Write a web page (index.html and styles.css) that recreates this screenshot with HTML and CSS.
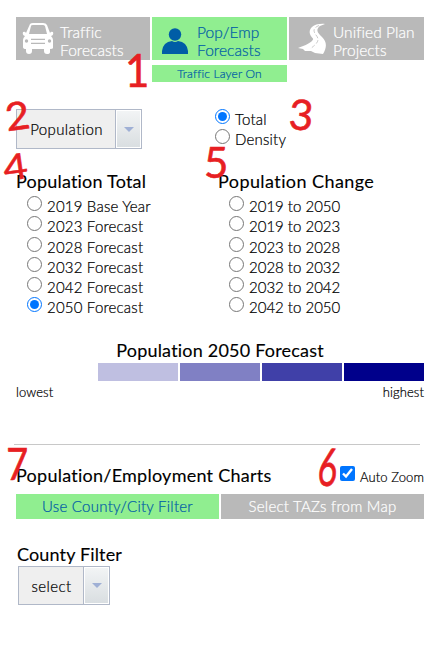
FILE: index.html
```html
<!DOCTYPE html>
<html lang="en">
<head>
<meta charset="utf-8">
<title>Population Forecasts</title>
<link rel="stylesheet" href="styles.css">
</head>
<body>
<main class="panel">
  <nav class="tabs">
    <div class="tab tab-traffic">
      <svg class="car" width="32" height="32" viewBox="0 0 32 32"><path fill="#fff" fill-rule="evenodd" d="M8 1Q9 0 11 0H21Q24 0 25 2L28 10Q29 8 31 9Q32 12 29 13Q31 15 31 17V25Q31 26 28 26V29Q28 31 25 31Q22 31 22 28V26H10V28Q10 31 7 31Q4 31 4 28V26Q1 26 1 24V17Q1 15 3 13Q0 12 1 9Q3 8 4 10ZM9 3L7 11H25L23 3Q22 2 21 2H11Q9 2 9 3Z"/><g fill="#b9b9b9"><circle cx="4.5" cy="18" r="1.7"/><circle cx="27.5" cy="18" r="1.7"/><path d="M9 15.7H23V17H9ZM9 19.7H23V21H9Z"/></g></svg>
      <span>Traffic<br>Forecasts</span>
    </div>
    <div class="tab tab-pop active">
      <svg width="26" height="27" viewBox="0 0 26 27"><circle cx="13" cy="6.5" r="6.2" fill="#005da6"/><path fill="#005da6" d="M0 26V23Q1 14 10 13Q13 15 16 13Q25 14 26 23V26Z"/></svg>
      <span>Pop/Emp<br>Forecasts</span>
    </div>
    <div class="tab tab-plan">
      <svg width="28" height="32" viewBox="0 0 28 32"><path fill="#fff" d="M27 1C17 0 10 5 12 11C13 15 17 15 14 18C11 21 5 23 0 25L5 26L7 28L13 28L17 30L25 31C29 24 29 19 24 14C20 10 17 7 22 3Z"/><path fill="none" stroke="#c4c4c4" stroke-width=".9" stroke-dasharray="4 2" d="M21 2.500C15 5 15 8 18 12C22 17 20 20 12 26"/></svg>
      <span>Unified Plan<br>Projects</span>
    </div>
  </nav>
  <div class="layer active">Traffic Layer On</div>

  <section class="options">
    <div class="select"><span class="select-label population">Population</span><span class="arrow"></span></div>
    <div class="measure">
      <label class="choice"><input type="radio" name="measure" checked><span>Total</span></label>
      <label class="choice"><input type="radio" name="measure"><span>Density</span></label>
    </div>
  </section>

  <section class="layers">
    <div class="group">
      <h2 class="h-total">Population Total</h2>
      <label class="choice"><input type="radio" name="year"><span>2019 Base Year</span></label>
      <label class="choice"><input type="radio" name="year"><span>2023 Forecast</span></label>
      <label class="choice"><input type="radio" name="year"><span>2028 Forecast</span></label>
      <label class="choice"><input type="radio" name="year"><span>2032 Forecast</span></label>
      <label class="choice"><input type="radio" name="year"><span>2042 Forecast</span></label>
      <label class="choice"><input type="radio" name="year" checked><span>2050 Forecast</span></label>
    </div>
    <div class="group changes">
      <h2 class="h-change">Population Change</h2>
      <label class="choice"><input type="radio" name="year"><span>2019 to 2050</span></label>
      <label class="choice"><input type="radio" name="year"><span>2019 to 2023</span></label>
      <label class="choice"><input type="radio" name="year"><span>2023 to 2028</span></label>
      <label class="choice"><input type="radio" name="year"><span>2028 to 2032</span></label>
      <label class="choice"><input type="radio" name="year"><span>2032 to 2042</span></label>
      <label class="choice"><input type="radio" name="year"><span>2042 to 2050</span></label>
    </div>
  </section>

  <section class="legend">
    <h2 class="h-legend">Population 2050 Forecast</h2>
    <div class="ramp"><i></i><i class="c1"></i><i class="c2"></i><i class="c3"></i><i class="c4"></i></div>
    <div class="ends"><span>lowest</span><span>highest</span></div>
  </section>

  <hr>

  <section class="charts">
    <header>
      <h2 class="h-charts">Population/Employment Charts</h2>
      <label class="zoom"><input type="checkbox" checked><span>Auto Zoom</span></label>
    </header>
    <div class="modes">
      <div class="mode active">Use County/City Filter</div>
      <div class="mode mode-map">Select TAZs from Map</div>
    </div>
    <div class="filter">
      <h2 class="h-county">County Filter</h2>
      <div class="select small"><span class="select-label">select</span><span class="arrow"></span></div>
    </div>
  </section>
</main>
<div class="marks">
  <b class="m1">1</b><b class="m2">2</b><b class="m3">3</b><b class="m4">4</b><b class="m5">5</b><b class="m6">6</b><b class="m7">7</b>
</div>
</body>
</html>
```
FILE: styles.css
```css
* { box-sizing: border-box; }
body {
  margin: 0;
  width: 432px;
  height: 658px;
  overflow: hidden;
  position: relative;
  background: #fff;
  color: #000;
  font: 300 15px/20px Lato, "Open Sans", sans-serif;
  font-variant-ligatures: none;
  -webkit-text-stroke: .22px currentColor;
}
.panel { padding: 17px 8px 0 16px; }
.tabs { display: grid; grid-template-columns: 134px 135px 135px; gap: 2px; height: 43px; }
.tab {
  display: flex;
  align-items: center;
  background: #b9b9b9;
  color: #fff;
  font-size: 15.5px;
  line-height: 18px;
  white-space: nowrap;
}
.tab span { padding-top: 5px; letter-spacing: .05px; }
.tab-traffic { padding-left: 6px; gap: 6px; }
.tab-pop { padding-left: 10px; gap: 9px; }
.tab-pop svg { margin-top: 5px; }
.tab-plan { padding-left: 9px; gap: 7px; }
.active { background: #90ee90; color: #005da6; }
.layer {
  width: 135px;
  height: 17px;
  margin: 5px 0 0 136px;
  text-align: center;
  font-size: 12px;
  line-height: 18px;
  letter-spacing: .15px;
}
.options { display: flex; margin-top: 27px; height: 60px; }
.select {
  display: flex;
  width: 126px;
  height: 40px;
  border: 1px solid #b0b8c8;
  background: #efefef;
}
.select-label { flex: 1; text-align: center; line-height: 39px; letter-spacing: .4px; }
.arrow {
  display: flex;
  align-items: center;
  justify-content: center;
  width: 25px;
  border: 1px solid #fff;
  box-shadow: -1px 0 #b0b8c8;
  background: linear-gradient(#f2f4f5, #d9dee1);
}
.arrow::after {
  content: "";
  border: 5px solid transparent;
  border-top-color: #9fb0d5;
  border-bottom: 0;
}
.measure { margin: -3px 0 0 73px; }
.choice { display: flex; height: 20.3px; white-space: nowrap; letter-spacing: .2px; }
.changes .choice { letter-spacing: 0; }
.choice input { width: 15px; height: 15px; margin: 3px 5px 0 0; flex: none; }
.choice span { line-height: 27px; }
h2 { margin: 0; font-size: 18px; line-height: 24px; font-weight: 400; white-space: nowrap; letter-spacing: .2px; -webkit-text-stroke: .12px #000; }
.h-change { letter-spacing: .42px; }
.h-charts { letter-spacing: .25px; }
.h-county { margin-left: -1px; letter-spacing: .15px; }
.layers { display: grid; grid-template-columns: 202px 1fr; height: 168px; }
.group .choice { margin-left: 11px; }
.legend { padding-top: 1px; }
.legend h2 { text-align: center; }
.ramp { display: grid; grid-template-columns: repeat(5, 80px); gap: 2px; height: 18px; margin-top: 1px; }
.c1 { background: #bfbfe1; }
.c2 { background: #8080c4; }
.c3 { background: #4040a8; }
.c4 { background: #00008b; }
.ends { display: flex; justify-content: space-between; font-size: 13px; line-height: 23px; height: 24px; letter-spacing: .1px; }
hr { height: 1px; border: 0; background: #c8c8c8; margin: 39px 4px 0 -2px; }
.charts header { display: flex; justify-content: space-between; height: 49px; padding-top: 18px; }
.zoom { display: flex; font-size: 13px; white-space: nowrap; letter-spacing: .1px; }
.zoom input { width: 15px; height: 15px; margin: 3px 5px 0 0; }
.zoom span { line-height: 29px; }
.modes { display: grid; grid-template-columns: 203px 203px; gap: 2px; height: 25px; }
.mode { text-align: center; line-height: 25px; background: #b9b9b9; color: #fff; letter-spacing: .25px; }
.mode.active { background: #90ee90; color: #005da6; }
.filter { padding: 23px 0 0 2px; }
.select.small { width: 92px; height: 39px; }
.marks b {
  position: absolute;
  color: #e71f23;
  font: 400 42px/40px Lato, sans-serif;
  -webkit-text-stroke: .6px #e71f23;
}
.m1 { left: 125px; top: 49px; transform: scale(1, 1.12); }
.m2 { left: 5px; top: 95px; transform: rotate(-8deg) scale(1, .92); }
.m3 { left: 289px; top: 94px; transform: rotate(4deg); }
.m4 { left: 3px; top: 146px; transform: rotate(-8deg) scale(1, .85); }
.m5 { left: 204px; top: 142px; }
.m6 { left: 316px; top: 446px; transform: rotate(6deg) scale(.8, 1.25); }
.m7 { left: 5px; top: 443px; transform: scale(.9, 1.05); }
```
